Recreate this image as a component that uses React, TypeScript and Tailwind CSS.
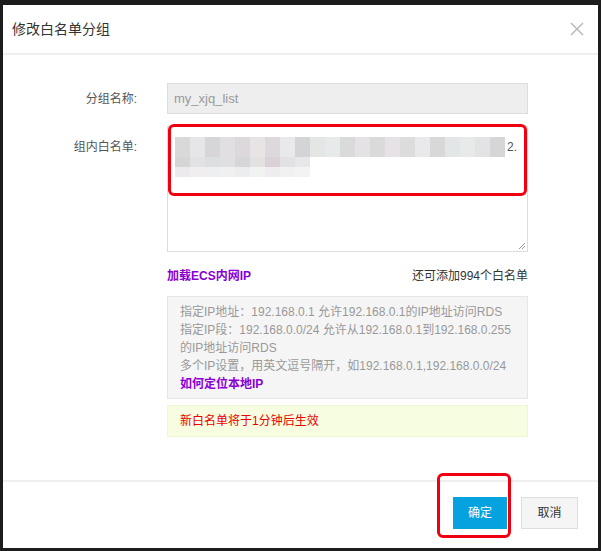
import React from 'react'

const font = { fontFamily: '"Liberation Sans", "Noto Sans CJK SC", sans-serif' }

const row1 = ['#d9d9da', '#e6e6e8', '#d6d5d8', '#e2dfe2', '#ddd8dc', '#e8e4e6', '#dcd8db', '#e9e9eb', '#d4d4d6', '#e4e6e6', '#e7eaea', '#dadada', '#e4e2e4', '#dadada', '#e6e2e5', '#dddcdd', '#e9e8ea', '#d8d8d9', '#e3e6e6', '#e8eaea', '#e3e3e5', '#d6d6d7']
const row2 = ['#d5d5d6', '#e2e2e4', '#dbdfe1', '#e0dfe1', '#d6d6d8', '#e4e1e3', '#d9d1d6', '#e2e2e4', '#e7e7e9']
const row3 = ['#eceaec', '#f1eef0', '#eeeff0', '#f0f0f1', '#ecedee', '#f2f2f3', '#eeecee', '#f1f1f2', '#f3f3f4']

export default function App() {
    return (
        <div className="w-[601px] h-[551px] bg-[#1c1c1c] pt-[5px] pl-[3px] pr-[3px] pb-[3px] flex flex-col" style={font}>
            <div className="relative flex-1 bg-white flex flex-col">
                {/* header */}
                <div className="h-[50px] flex items-center justify-between pl-[9px] pr-[14px] border-b-2 border-[#efefef]">
                    <span className="text-[14px] text-[#333]">修改白名单分组</span>
                    <svg width="14" height="14" viewBox="0 0 14 14" className="text-[#bbb]">
                        <path d="M1 1L13 13M13 1L1 13" stroke="currentColor" strokeWidth="1.6" />
                    </svg>
                </div>

                {/* body */}
                <div className="flex-1 pt-[28px] pl-[164px] pr-[70px] flex flex-col text-[12px]">
                    <div className="relative flex items-center h-[31px]">
                        <span className="absolute right-[100%] mr-[30px] whitespace-nowrap text-[#555]">分组名称:</span>
                        <div className="w-full h-full bg-[#eeeeee] border border-[#dddddd] flex items-center px-[6px] text-[#999] text-[13px]">my_xjq_list</div>
                    </div>

                    <div className="relative mt-[12px]">
                        <span className="absolute right-[100%] mr-[30px] top-[12px] whitespace-nowrap text-[#555]">组内白名单:</span>
                        <div className="relative w-full h-[126px] border border-[#dddddd] bg-white">
                            <div className="pt-[10px] pl-[7px] flex flex-col">
                                <div className="flex items-center">
                                    {row1.map((c, i) => (
                                        <div key={i} className="w-[15px] h-[20px]" style={{ background: c }} />
                                    ))}
                                    <span className="text-[#555] text-[12px] ml-[2px]">2.</span>
                                </div>
                                <div className="flex">
                                    {row2.map((c, i) => (
                                        <div key={i} className="w-[15px] h-[10px]" style={{ background: c }} />
                                    ))}
                                </div>
                                <div className="flex">
                                    {row3.map((c, i) => (
                                        <div key={i} className="w-[15px] h-[10px]" style={{ background: c }} />
                                    ))}
                                </div>
                            </div>
                            <svg width="8" height="8" viewBox="0 0 8 8" className="absolute right-[1px] bottom-[1px]">
                                <path d="M7 1L1 7M7 4L4 7" stroke="#999" strokeWidth="1" />
                            </svg>
                            <div className="absolute left-[0px] right-[0px] top-[-3px] h-[72px] border-[3px] border-[#f0000f] rounded-[6px]" />
                        </div>
                    </div>

                    <div className="flex justify-between items-center mt-[17px] h-[14px]">
                        <span className="text-[#8a00d4] font-bold">加载ECS内网IP</span>
                        <span className="text-[#333]">还可添加994个白名单</span>
                    </div>

                    <div className="mt-[13px] bg-[#f5f5f5] border border-[#e6e6e6] px-[12px] pt-[6px] pb-[5px] text-[#999] leading-[18px]">
                        <div>指定IP地址：192.168.0.1 允许192.168.0.1的IP地址访问RDS</div>
                        <div>指定IP段：192.168.0.0/24 允许从192.168.0.1到192.168.0.255的IP地址访问RDS</div>
                        <div>多个IP设置，用英文逗号隔开，如192.168.0.1,192.168.0.0/24</div>
                        <div className="text-[#8a00d4] font-bold">如何定位本地IP</div>
                    </div>

                    <div className="mt-[6px] h-[32px] bg-[#f6fde0] border border-[#eef6d6] flex items-center px-[12px] text-[#ee0000]">
                        新白名单将于1分钟后生效
                    </div>
                </div>

                {/* footer */}
                <div className="h-[68px] border-t-2 border-[#efefef] flex items-center justify-end gap-[14px] pr-[20px] pb-[4px]">
                    <div className="relative">
                        <button className="w-[54px] h-[32px] bg-[#06a2e0] text-white text-[12px]">确定</button>
                        <div className="absolute left-[-16px] top-[-24px] w-[74px] h-[65px] border-[3px] border-[#f0000f] rounded-[6px]" />
                    </div>
                    <button className="w-[57px] h-[32px] bg-[#f5f5f5] border border-[#dddddd] text-[#333] text-[12px]">取消</button>
                </div>
            </div>
        </div>
    )
}
